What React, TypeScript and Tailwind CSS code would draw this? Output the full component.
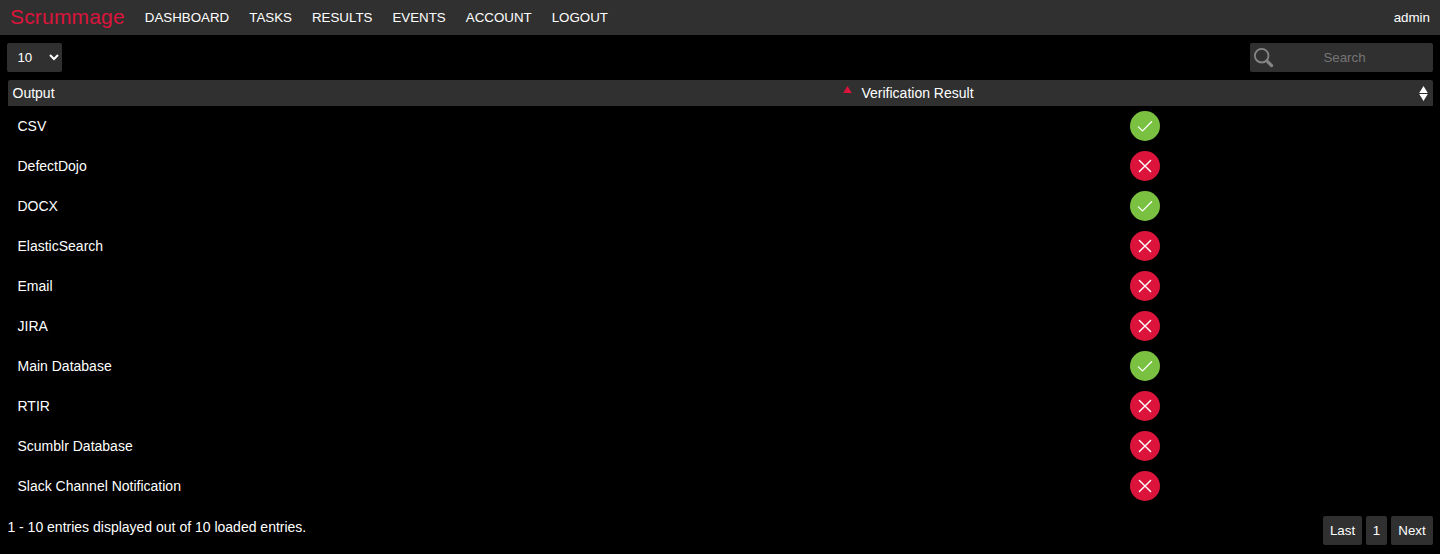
const navItems = ["DASHBOARD", "TASKS", "RESULTS", "EVENTS", "ACCOUNT", "LOGOUT"];

const outputs: { name: string; ok: boolean }[] = [
  { name: "CSV", ok: true },
  { name: "DefectDojo", ok: false },
  { name: "DOCX", ok: true },
  { name: "ElasticSearch", ok: false },
  { name: "Email", ok: false },
  { name: "JIRA", ok: false },
  { name: "Main Database", ok: true },
  { name: "RTIR", ok: false },
  { name: "Scumblr Database", ok: false },
  { name: "Slack Channel Notification", ok: false },
];

function StatusIcon({ ok }: { ok: boolean }) {
  return (
    <svg width="30" height="30" viewBox="0 0 30 30" fill="none" stroke="#fff" strokeLinecap="round" strokeLinejoin="round">
      <circle cx="15" cy="15" r="15" fill={ok ? "#7ac142" : "#dc143c"} stroke="none" />
      {ok ? (
        <path d="M8.4 15.9 12.5 19.9 21.6 10.7" strokeWidth="1.3" />
      ) : (
        <path d="M9.4 9.4 20.6 20.6M20.6 9.4 9.4 20.6" strokeWidth="1.35" />
      )}
    </svg>
  );
}

function SearchIcon() {
  return (
    <svg width="20" height="20" viewBox="0 0 20 20" fill="none" stroke="#858585">
      <circle cx="7.7" cy="7.7" r="6.8" strokeWidth="1.8" />
      <path d="M12.4 12.4 14 14" strokeWidth="2" />
      <path d="M13.6 13.6 17.6 17.6" strokeWidth="3.2" strokeLinecap="round" />
    </svg>
  );
}

export default function App() {
  const pageButton = "h-[29px] rounded-[2px] bg-[#303030] text-center text-[13.333px] leading-[15px]";
  return (
    <div className="flex h-[554px] w-full flex-col overflow-hidden bg-black font-['Liberation_Sans',Arial,sans-serif] text-[14px] text-white">
      <nav className="flex h-[35px] shrink-0 items-center bg-[#303030] px-[10px] text-[13.333px]">
        <span className="mr-5 w-[114.8px] text-[21px] leading-[24px] tracking-[0.18px] text-[#dc143c] -mt-[2px]">Scrummage</span>
        <div className="flex gap-5">
          {navItems.map((item) => (
            <a key={item} className="leading-[15px]">{item}</a>
          ))}
        </div>
        <span className="ml-auto leading-[15px]">admin</span>
      </nav>

      <div className="mt-2 flex h-[29px] shrink-0 justify-between px-[7px]">
        <select className="h-[29px] w-[55px] rounded-[2px] bg-[#303030] pl-[6.4px] pr-0 text-[13.333px] text-white">
          <option>10</option>
        </select>
        <div className="flex w-[183px] items-center rounded-[2px] bg-[#303030] pl-1">
          <SearchIcon />
          <input
            placeholder="Search"
            className="w-[141px] bg-transparent text-center text-[13.333px] leading-[15px] outline-none placeholder:text-[#757575]"
          />
        </div>
      </div>

      <div className="ml-2 mr-[7px] mt-2 flex h-[26px] shrink-0 items-center rounded-t-[2px] bg-[#303030] leading-4">
        <div className="flex w-[849px] items-center justify-between pl-[4.5px] pr-[5px]">
          <span>Output</span>
          <svg width="9" height="7" viewBox="0 0 9 7" className="-mt-[7px]">
            <path d="M4.5 0 8.8 7H0.2Z" fill="#dc143c" />
          </svg>
        </div>
        <div className="flex flex-1 items-center justify-between pl-[4.5px] pr-[5px]">
          <span>Verification Result</span>
          <svg width="9" height="15" viewBox="0 0 9 15" className="mt-[1px]">
            <path d="M4.5 0 8.8 7H0.2ZM0.2 8H8.8L4.5 15Z" fill="#fff" />
          </svg>
        </div>
      </div>

      <div className="ml-2 mr-[7px] shrink-0">
        {outputs.map((row) => (
          <div key={row.name} className="flex h-10 items-center leading-4">
            <div className="w-[849px] pl-[9.5px]">{row.name}</div>
            <div className="flex flex-1 justify-center">
              <StatusIcon ok={row.ok} />
            </div>
          </div>
        ))}
      </div>

      <div className="mt-[10px] flex shrink-0 justify-between pl-[7.4px] pr-[7px]">
        <span className="mt-[3px] leading-4">1 - 10 entries displayed out of 10 loaded entries.</span>
        <div className="flex gap-1">
          <button className={`${pageButton} w-[39px]`}>Last</button>
          <button className={`${pageButton} w-[21px]`}>1</button>
          <button className={`${pageButton} w-[42px]`}>Next</button>
        </div>
      </div>
    </div>
  );
}
